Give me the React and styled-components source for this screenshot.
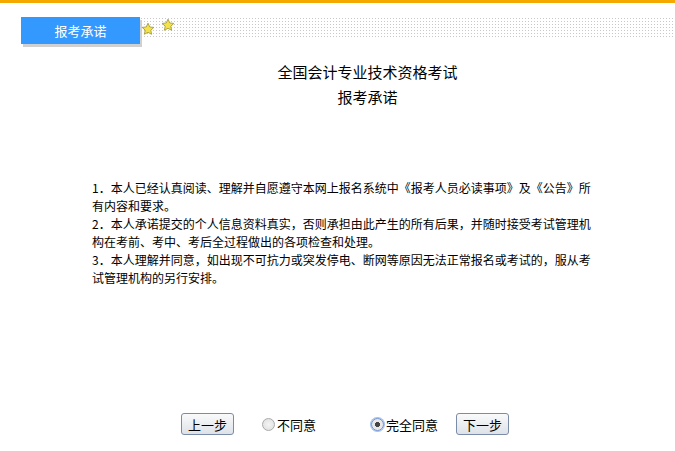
import React from "react";
import styled, { createGlobalStyle } from "styled-components";

const G = createGlobalStyle`
  body { margin:0; background:#fff; font-family:"SimSun","Noto Sans CJK SC",sans-serif; font-size:12px; color:#000; }
`;
const Top = styled.div`height:3px;background:#f5a800;`;
const Head = styled.div`display:flex;align-items:flex-start;margin-top:14px;height:30px;`;
const Tab = styled.div`
  margin-left:21px;width:119px;height:27px;background:#3399ff;color:#fff;font-size:13px;
  display:flex;align-items:center;justify-content:center;box-shadow:2px 3px 0 #d0d0d0;
`;
const Dots = styled.div`
  flex:1;height:22px;position:relative;
  background-image:radial-gradient(#c8c8c8 0.8px, transparent 0.9px);
  background-size:3px 3px;
`;
const Star = styled.svg`position:absolute;left:${p=>p.x}px;top:${p=>p.y}px;`;
const Title = styled.div`text-align:center;font-size:15px;line-height:25px;margin-top:12px;padding-left:60px;`;
const Body = styled.div`margin:70px 0 0 92px;width:502px;line-height:18px;font-size:12px;`;
const Bar = styled.div`display:flex;align-items:center;margin-top:126px;padding-left:181px;`;
const Btn = styled.button`
  width:53px;height:22px;font-size:13px;font-family:inherit;padding:0;
  border:1px solid #7a8ca8;border-radius:3px;background:linear-gradient(#fafafa,#dde3ea);margin-right:${p=>p.mr}px;
`;
const Radio = styled.label`display:flex;align-items:center;font-size:13px;margin-right:${p=>p.mr}px;`;
const Dot = styled.span`
  width:11px;height:11px;border-radius:50%;border:1px solid ${p=>p.on?"#6f8fd0":"#aaa"};
  background:radial-gradient(${p=>p.on?"#444 30%,#e8e8e8 35%":"#f4f4f4,#ddd"});margin-right:2px;
  box-shadow:${p=>p.on?"0 0 0 1px #9ec0f5":"none"};
`;
const S = ({x,y}) => (
  <Star x={x} y={y} width="14" height="14" viewBox="0 0 24 24">
    <path d="M12 2l3 6.5 7 .8-5.2 4.8 1.4 7L12 17.6 5.8 21l1.4-7L2 9.3l7-.8z" fill="#f3e24a" stroke="#a59a3a" strokeWidth="1.5"/>
  </Star>
);
export default function App(){
  return <>
    <G/>
    <Top/>
    <Head>
      <Tab>报考承诺</Tab>
      <Dots><S x={1} y={5}/><S x={21} y={1}/></Dots>
    </Head>
    <Title>全国会计专业技术资格考试<br/>报考承诺</Title>
    <Body>
      1．本人已经认真阅读、理解并自愿遵守本网上报名系统中《报考人员必读事项》及《公告》所有内容和要求。<br/>
      2．本人承诺提交的个人信息资料真实，否则承担由此产生的所有后果，并随时接受考试管理机构在考前、考中、考后全过程做出的各项检查和处理。<br/>
      3．本人理解并同意，如出现不可抗力或突发停电、断网等原因无法正常报名或考试的，服从考试管理机构的另行安排。
    </Body>
    <Bar>
      <Btn mr={28}>上一步</Btn>
      <Radio mr={55}><Dot/>不同意</Radio>
      <Radio mr={18}><Dot on/>完全同意</Radio>
      <Btn>下一步</Btn>
    </Bar>
  </>;
}
